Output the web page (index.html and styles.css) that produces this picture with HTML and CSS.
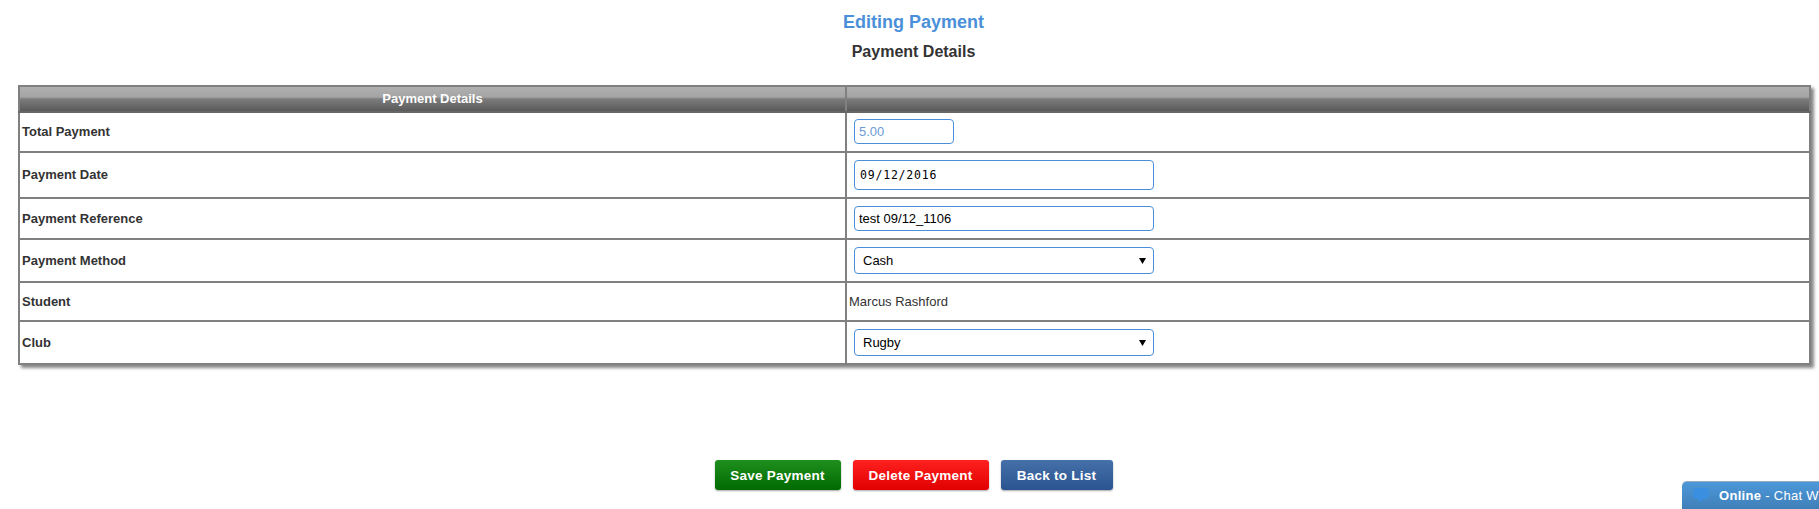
FILE: index.html
```html
<!DOCTYPE html>
<html lang="en">
<head>
<meta charset="utf-8">
<title>Editing Payment</title>
<link rel="stylesheet" href="styles.css">
</head>
<body>
<main class="page">
  <h1 class="title">Editing Payment</h1>
  <h2 class="subtitle">Payment Details</h2>
  <table class="details">
    <colgroup><col class="col-label"><col></colgroup>
    <thead>
      <tr class="head"><th>Payment Details</th><th></th></tr>
    </thead>
    <tbody>
      <tr class="r1"><td class="label">Total Payment</td><td class="field"><input class="ctl ctl-small" type="text" value="5.00"></td></tr>
      <tr class="r2"><td class="label">Payment Date</td><td class="field"><input class="ctl ctl-date" type="text" value="09/12/2016"></td></tr>
      <tr class="r3"><td class="label">Payment Reference</td><td class="field"><input class="ctl ctl-text" type="text" value="test 09/12_1106"></td></tr>
      <tr class="r4"><td class="label">Payment Method</td><td class="field"><select class="ctl ctl-select"><option>Cash</option></select></td></tr>
      <tr class="r5"><td class="label">Student</td><td class="plain">Marcus Rashford</td></tr>
      <tr class="r6"><td class="label">Club</td><td class="field"><select class="ctl ctl-select"><option>Rugby</option></select></td></tr>
    </tbody>
  </table>
  <div class="actions">
    <button class="btn btn-save" type="button">Save Payment</button>
    <button class="btn btn-delete" type="button">Delete Payment</button>
    <button class="btn btn-back" type="button">Back to List</button>
  </div>
</main>
<aside class="chat">
  <svg class="chat-icon" width="18" height="18" viewBox="0 0 18 18" aria-hidden="true"><path d="M5 1h8c2.500 0 4 1.500 4 4v3c0 2.500-1.500 4-4 4h-2l-3 4-1-4H5C2.500 12 1 10.500 1 8V5c0-2.500 1.500-4 4-4z" fill="#3b8fe0"/></svg>
  <span class="chat-text"><b>Online</b> - Chat W</span>
</aside>
</body>
</html>
```
FILE: styles.css
```css
html, body { margin: 0; padding: 0; height: 509px; overflow: hidden; background: #fff; }
body { font-family: "Liberation Sans", Arial, sans-serif; color: #333; font-size: 13px; }
.page { margin: 0 10px 0 18px; padding-top: 12px; }
.title { margin: 0; height: 20px; line-height: 20px; font-size: 18px; font-weight: bold; color: #4a90d9; text-align: center; }
.subtitle { margin: 11px 0 0; height: 18px; line-height: 18px; font-size: 16px; font-weight: bold; color: #333; text-align: center; }
.details { margin-top: 24px; width: calc(100% + 2px); border-collapse: collapse; table-layout: fixed; box-shadow: 3px 3px 3px #888; }
.col-label { width: 827px; }
.details th, .details td { border: 2px solid #808080; padding: 0; }
.head { height: 26px; }
.details th { color: #fff; font-size: 13px; font-weight: bold; text-align: center; vertical-align: bottom; padding-bottom: 5px; line-height: 15px;
  background: linear-gradient(#b0b0b0 0, #a4a4a4 10px, #7c7c7c 12px, #5a5a5a 100%);
  border-bottom-color: #666; }
.details th + th { border-left-color: #555; }
.r1 { height: 40px; }
.r2 { height: 46px; }
.r3 { height: 41px; }
.r4 { height: 43px; }
.r5 { height: 39px; }
.r6 { height: 43px; }
.r1 td { padding-bottom: 2px; }
.r2 td { padding-bottom: 1px; }
.label { font-weight: bold; font-size: 13px; padding-left: 2px !important; }
.plain { padding-left: 2px !important; font-size: 13px; }
.field { padding-left: 7px !important; }
.ctl { display: block; box-sizing: border-box; margin: 0; border: 1px solid #4a90d9; border-radius: 4px; background: #fff; font-family: "Liberation Sans", Arial, sans-serif; font-size: 13px; color: #000; outline: none; }
.ctl-small { width: 100px; height: 25px; padding: 0 4px; color: #6d9bd6; }
.ctl-date { width: 300px; height: 30px; padding: 0 5px; font-family: "DejaVu Sans Mono", monospace; font-size: 11.5px; letter-spacing: 0.8px; }
.ctl-text { width: 300px; height: 25px; padding: 0 4px; }
.ctl-select { width: 300px; height: 27px; padding: 0 8px; appearance: none;
  background: #fff url("data:image/svg+xml,%3Csvg xmlns='http://www.w3.org/2000/svg' width='7' height='6'%3E%3Cpath d='M0 0h7L3.500 6z' fill='%23000'/%3E%3C/svg%3E") no-repeat right 7px center; }
.actions { margin-top: 95px; display: flex; justify-content: center; gap: 12px; }
.btn { box-sizing: border-box; height: 30px; border: 0; border-radius: 3px; padding: 0; color: #fff; font-family: "Liberation Sans", Arial, sans-serif; font-size: 13.5px; font-weight: bold; letter-spacing: 0.25px; box-shadow: 0 1px 2px rgba(0,0,0,.35); }
.btn-save { width: 126px; background: linear-gradient(#1f8f1f, #006a00); }
.btn-delete { width: 136px; background: linear-gradient(#ff2020, #e00000); }
.btn-back { width: 112px; background: linear-gradient(#4570a8, #2a5490); }
.chat { position: absolute; left: 1682px; top: 481px; width: 137px; height: 28px; box-sizing: border-box; overflow: hidden; white-space: nowrap; display: flex; align-items: center; gap: 9px; padding-left: 10px; border-top: 1px solid #9ab; border-top-left-radius: 5px; background: linear-gradient(#4c98da, #3f7fb8); color: #fff; font-size: 13px; }
.chat-icon { flex: none; }
.chat-text { letter-spacing: 0.3px; }
```
